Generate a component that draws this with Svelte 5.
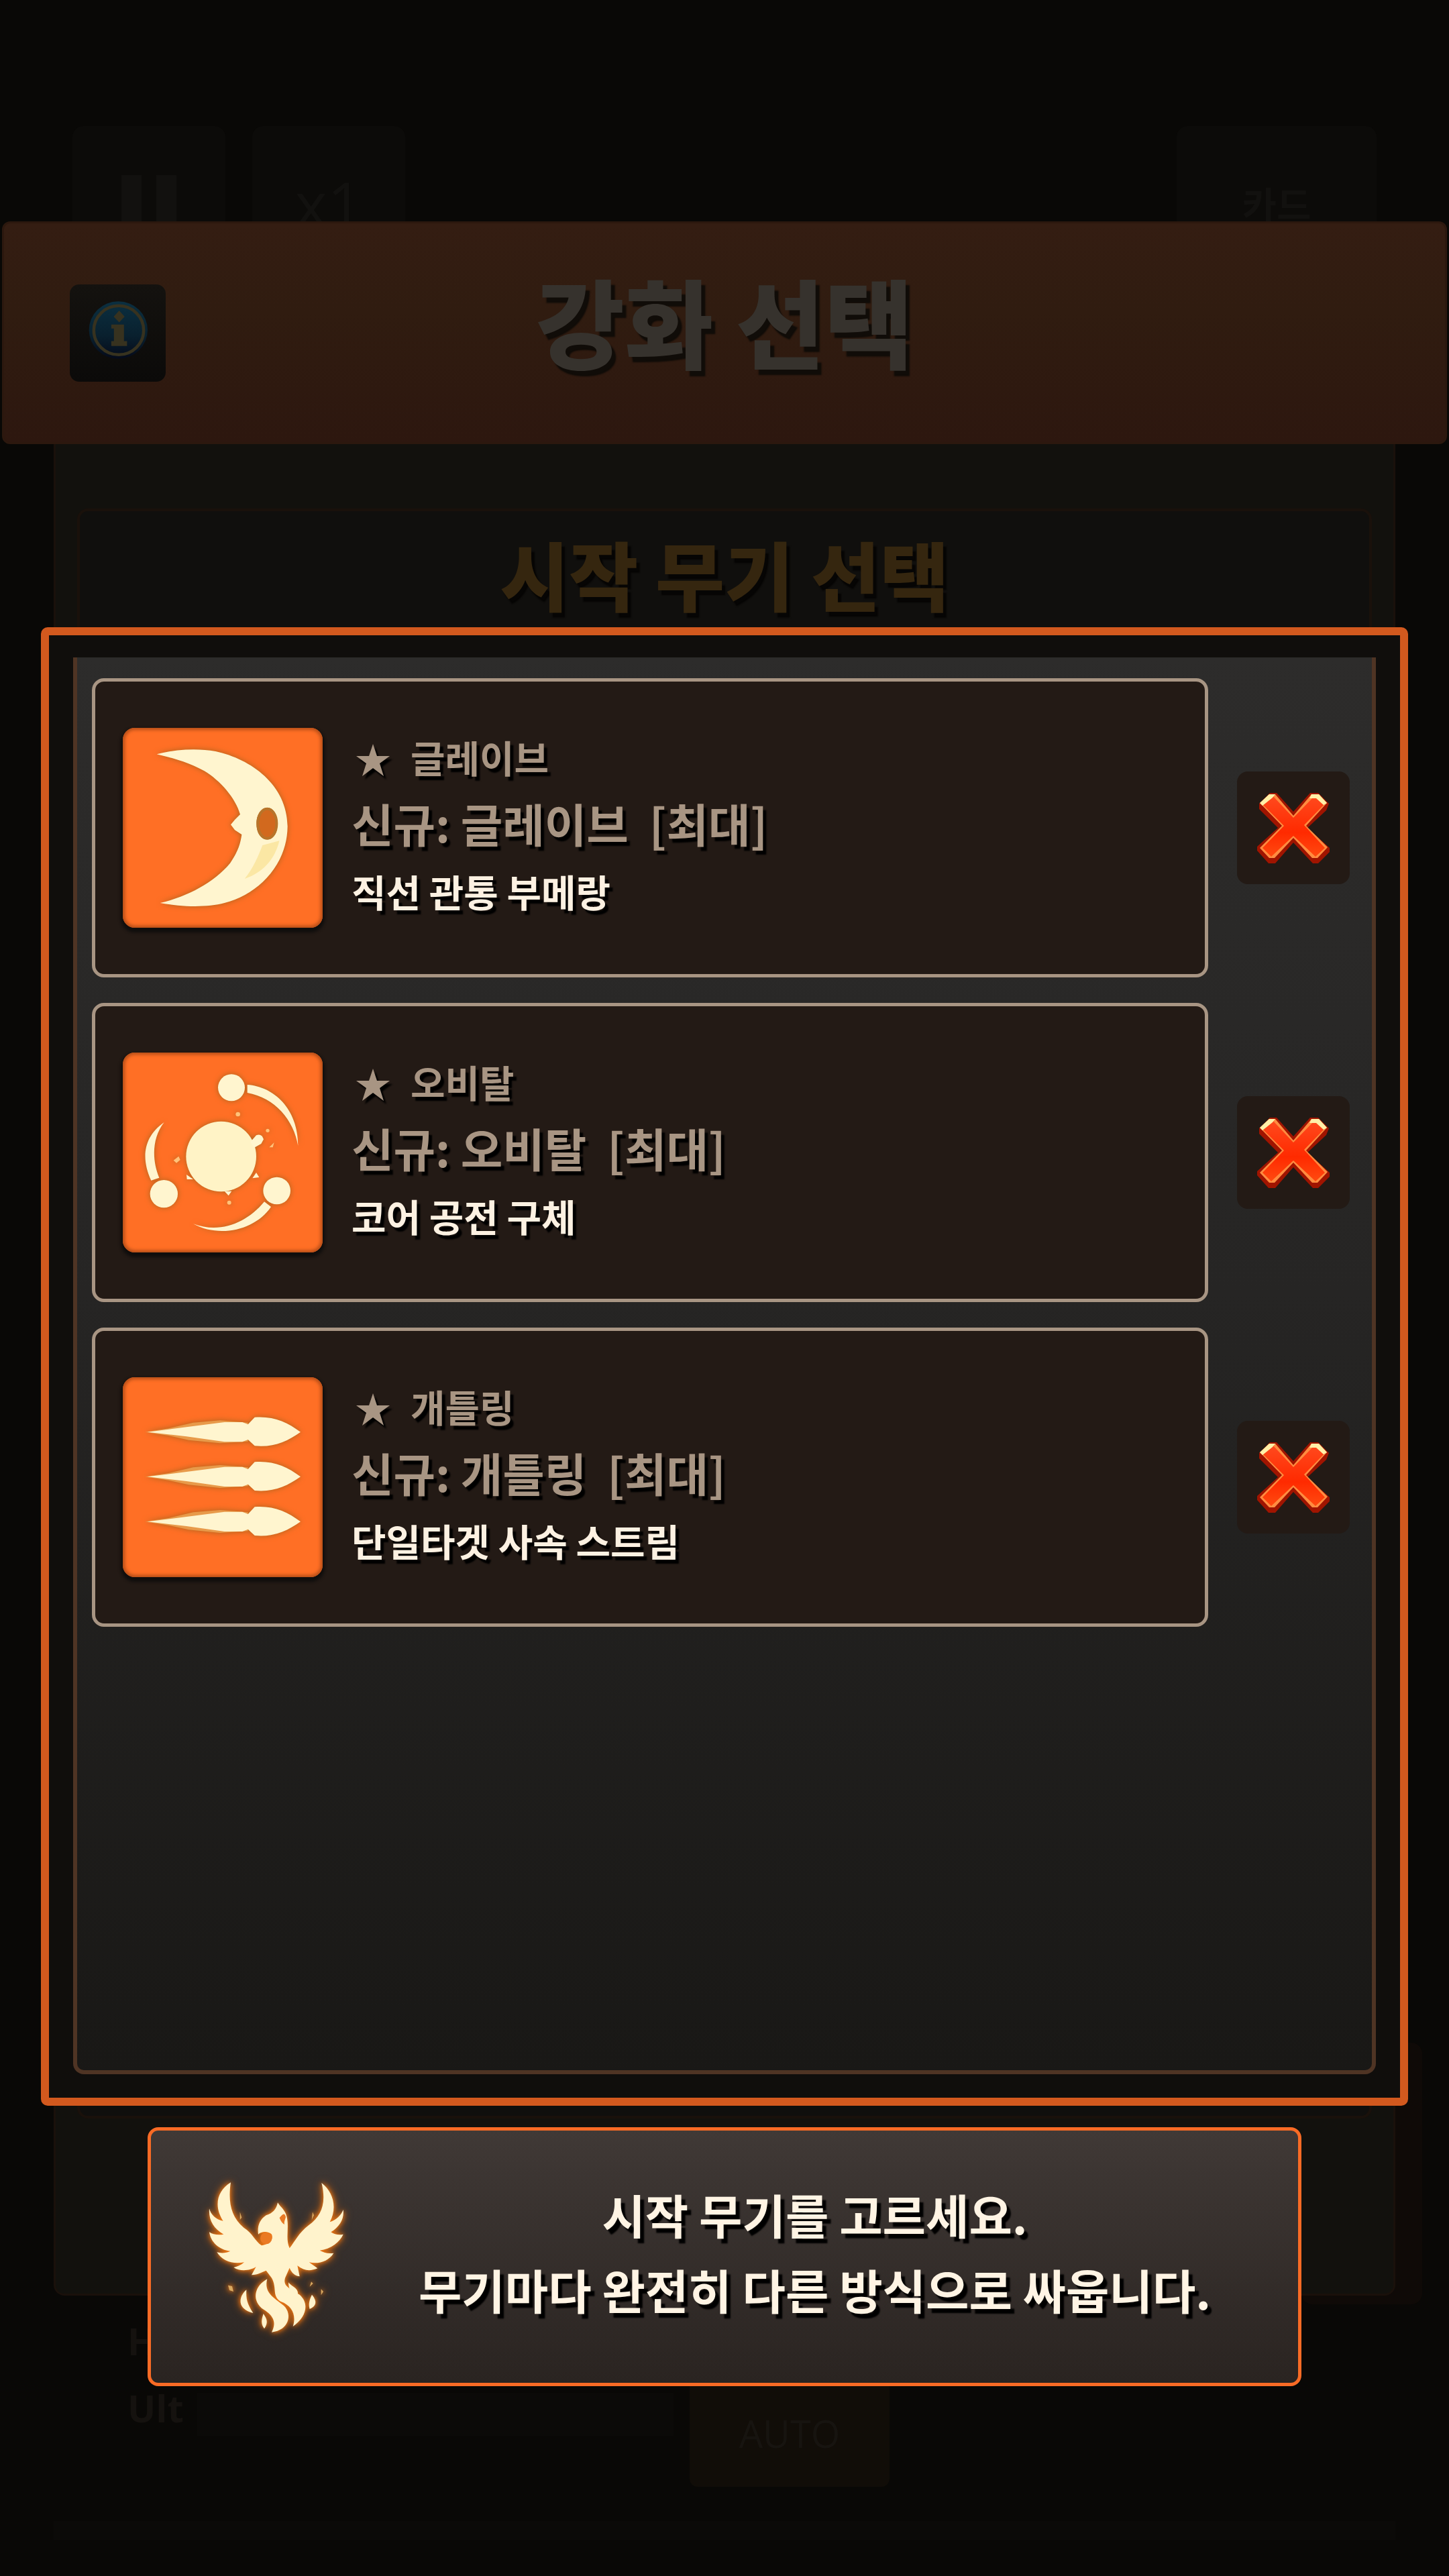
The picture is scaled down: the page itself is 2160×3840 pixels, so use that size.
<script>
  const weapons = [
    { id: 'glaive', name: '글레이브', text: '직선 관통 부메랑' },
    { id: 'orbital', name: '오비탈', text: '코어 공전 구체' },
    { id: 'gatling', name: '개틀링', text: '단일타겟 사속 스트림' }
  ];
  let removed = $state([]);
  const shown = $derived(weapons.filter((w) => !removed.includes(w.id)));
</script>

{#snippet glaive()}
  <svg class="art" viewBox="65 75 894 894" aria-hidden="true">
    <path fill-rule="evenodd" d="M217 193C300 170 400 165 480 180C640 215 800 330 802 515C800 690 670 820 520 858C440 880 320 875 232 858C350 830 470 770 545 680C580 630 592 590 597 552L566 532L548 508L566 486L590 462C570 390 500 310 430 268C360 230 290 210 217 193ZM711 432C683 432 663 465 663 503C663 545 683 574 711 574C740 574 757 545 757 503C757 465 740 432 711 432Z" />
    <path class="shade" d="M690 600L765 580C750 650 700 720 610 750C650 700 670 650 690 600Z" />
    <ellipse class="eye" cx="711" cy="503" rx="42" ry="66" />
  </svg>
{/snippet}

{#snippet orbital()}
  <svg class="art" viewBox="65 88 894 894" aria-hidden="true">
    <circle class="core" cx="505" cy="553" r="157" />
    <circle cx="551" cy="245" r="60" />
    <circle cx="249" cy="720" r="62" />
    <circle cx="754" cy="706" r="61" />
    <path d="M622 232C740 240 850 340 849 505C830 390 745 290 622 268Z" />
    <path d="M250 400C150 470 150 570 192 660L228 648C195 570 195 470 250 400Z" />
    <path d="M698 755C620 850 500 900 380 854C500 920 660 880 728 778Z" />
    <path d="M636 488L662 458Q686 448 695 476L684 496L652 514Z" />
    <path d="M350 634L380 655L352 655ZM662 625L675 646L645 650ZM520 708H552L538 728Z" />
    <g class="spark">
      <circle cx="580" cy="364" r="10" /><circle cx="713" cy="437" r="8" />
      <circle cx="541" cy="759" r="9" />
      <path d="M292 570L315 552L322 568L305 582ZM720 512L742 490L736 512Z" />
    </g>
  </svg>
{/snippet}

{#snippet gatling()}
  <svg class="art" viewBox="65 70 894 894" aria-hidden="true">
    {#each [315, 515, 716] as y}
      <g transform="translate(0 {y})">
        <path class="trail" d="M165 0L270 -16L380 -42L500 -52L625 -42V42L500 50L360 36L270 16Z" />
        <path d="M175 0L350 -22L520 -44H600L625 -34L655 -66C740 -72 800 -45 860 0C800 42 740 70 655 62L625 34L600 44H520L350 20Z" />
      </g>
    {/each}
  </svg>
{/snippet}

<main class="stage">
  <div class="hud">
    <div class="hud-top">
      <button class="hud-btn" aria-label="일시정지"><span class="bars"></span></button>
      <button class="hud-btn speed">x1</button>
      <button class="hud-btn cards">카드</button>
    </div>
    <div class="side-box"></div>
    <div class="hud-low">
      <div class="gauges"><span>HP</span><span>Ult</span></div>
      <div class="gauge-bar"></div>
      <button class="auto">AUTO</button>
    </div>
    <div class="hud-line"></div>
  </div>

  <section class="modal">
    <header class="banner">
      <button class="info" aria-label="정보">
        <svg viewBox="100 112 276 270" aria-hidden="true">
          <defs>
            <linearGradient id="blue" x1="0" y1="0" x2="0" y2="1">
              <stop offset="0" stop-color="#0b2f40" /><stop offset="0.6" stop-color="#09202e" /><stop offset="1" stop-color="#050a1a" />
            </linearGradient>
          </defs>
          <ellipse cx="239" cy="247" rx="134" ry="131" fill="url(#blue)" />
          <ellipse cx="241" cy="248" rx="114" ry="112" fill="none" stroke="#37321f" stroke-width="14" />
          <path fill="#37321f" d="M243 158L268 186L243 212L218 186ZM207 222H265V298H279V320H207V298H219V240H207Z" />
        </svg>
      </button>
      <h1>강화 선택</h1>
    </header>
    <div class="sheet">
      <div class="sheet-inner"><h2>시작 무기 선택</h2></div>
    </div>
  </section>

  <section class="guide">
    <div class="focus">
      <ul class="list">
        {#each shown as w (w.id)}
          <li>
            <button class="card">
              <span class="tile">
                {#if w.id === 'glaive'}{@render glaive()}{:else if w.id === 'orbital'}{@render orbital()}{:else}{@render gatling()}{/if}
              </span>
              <span class="copy">
                <span class="tag">
                  <svg class="star" viewBox="0 0 52 50" aria-hidden="true"><path d="M26 0L32 18H51L36 29L42 48L26 36L10 48L16 29L1 18H20Z" /></svg>
                  {w.name}
                </span>
                <span class="name">신규: {w.name}&nbsp; [최대]</span>
                <span class="desc">{w.text}</span>
              </span>
            </button>
            <button class="remove" aria-label="{w.name} 제외" onclick={() => (removed = [...removed, w.id])}>
              <svg viewBox="0 0 110 108" aria-hidden="true">
                <defs>
                  <linearGradient id="red-{w.id}" x1="0" y1="0" x2="0" y2="1">
                    <stop offset="0" stop-color="#ff4a1e" /><stop offset=".6" stop-color="#ff2a00" /><stop offset="1" stop-color="#ff4a10" />
                  </linearGradient>
                </defs>
                <path class="x-back" d="M4 18L20 2L30 2L55 30L80 2H92L108 18L104 28L76 54L109 84V90L92 107H84L55 76L28 107H18L1 88V82L32 54L4 26Z" />
                <path class="x-edge" d="M5 17L19 4H28L55 36L82 4H93L105 17L74 51L106 83L91 99H83L55 69L27 99H19L5 84L38 51Z" />
                <path fill="url(#red-{w.id})" d="M9 19L24 6L55 39L87 6L101 19L71 50L102 84L88 97L55 66L22 97L9 84L41 51Z" />
                <path class="x-shine" d="M5 17L19 4H28L24 9L9 21ZM82 4H93L105 17L100 20L89 10L79 10Z" />
              </svg>
            </button>
          </li>
        {/each}
      </ul>
    </div>

    <aside class="tip">
      <svg class="phoenix" viewBox="45 55 645 690" aria-hidden="true">
        <path d="M162 68C100 105 85 175 128 240C95 235 72 210 66 185C62 235 85 275 130 300C105 305 80 300 66 290C72 335 110 370 160 375C140 385 118 385 100 380C125 420 170 435 222 425C205 440 190 445 175 448C205 468 250 462 275 445L255 482C285 480 300 470 320 462L345 495C370 540 345 575 385 600C440 620 455 665 440 712C500 670 515 610 470 570C420 540 395 530 405 495L425 450C435 475 450 485 470 488L460 440C490 465 520 465 550 452L512 425C555 435 600 420 622 384C595 388 575 380 560 372C610 365 650 335 665 300C645 305 625 300 610 290C650 265 670 230 665 190C655 215 635 235 605 245C640 180 620 110 568 70C590 160 570 215 510 260C465 295 450 330 425 362C405 320 425 270 412 220C405 190 385 180 372 158C365 190 350 205 320 215C290 235 280 265 285 300C300 285 330 285 345 300C355 325 335 345 300 350C270 330 260 295 220 270C160 220 150 150 162 68Z" />
        <path d="M325 500C270 530 255 590 300 630C350 660 370 690 345 738C420 730 440 660 400 620C350 580 310 560 325 500Z" />
        <path d="M232 548C195 580 190 635 262 652C235 610 230 590 232 548ZM308 655C325 680 330 695 312 722C295 700 300 680 308 655ZM525 570C550 600 545 620 515 634C508 610 515 590 525 570ZM420 515C435 535 465 540 462 568C435 565 420 550 420 515Z" />
        <path class="ember" d="M150 528L168 532L174 556L156 550ZM522 512L530 520L515 534ZM566 545L576 556L566 572ZM203 200L211 225L203 235ZM528 200L534 215L524 236Z" />
        <path class="crest" d="M380 226C395 208 402 202 408 222C404 240 400 240 402 256C390 248 386 240 380 226Z" />
        <circle class="crest" cx="320" cy="318" r="26" />
      </svg>
      <p>시작 무기를 고르세요.<br />무기마다 완전히 다른 방식으로 싸웁니다.</p>
    </aside>
  </section>
</main>

<style>
  :global(body) { margin: 0; background: #090806; }
  * { box-sizing: border-box; }
  button { padding: 0; border: 0; font: inherit; color: inherit; cursor: pointer; }
  h1, h2, p, ul { margin: 0; padding: 0; }

  .stage {
    display: grid;
    min-height: 100vh;
    background: #090806;
    font-family: "Noto Sans CJK KR", "Noto Sans", sans-serif;
    font-weight: 700;
  }
  .hud, .modal, .guide { grid-area: 1 / 1; display: flex; flex-direction: column; min-width: 0; }

  .hud { padding: 188px 0 24px; }
  .hud-top { display: flex; gap: 40px; padding: 0 108px; }
  .hud-btn {
    display: grid; place-items: center;
    width: 228px; height: 228px;
    background: #0c0b09; color: #12110f; border-radius: 16px;
    font-size: 80px; font-weight: 400;
  }
  .speed { font-family: "Open Sans", sans-serif; font-size: 92px; }
  .cards { width: 298px; margin-left: auto; font-size: 56px; font-weight: 700; }
  .bars { width: 82px; height: 82px; border: solid #12110f; border-width: 0 30px; }
  .side-box { width: 180px; height: 390px; margin: 2629px 40px 0 auto; background: #0f0a07; border-radius: 16px; }
  .hud-low { display: flex; align-items: flex-start; gap: 24px; margin-top: 16px; padding: 0 190px; }
  .gauges { display: grid; width: 80px; gap: 24px; color: #15120f; font: 700 56px/76px "Open Sans", sans-serif; }
  .gauge-bar { width: 710px; height: 64px; margin-top: 116px; background: #0b0a08; }
  .auto { width: 298px; height: 256px; background: #110d08; color: #171410; border-radius: 12px; font: 400 56px/64px "Open Sans", sans-serif; padding-top: 96px; }
  .hud-line { height: 28px; margin: auto 80px 30px; background: #0b0a08; }

  .modal { padding-top: 330px; }
  .banner {
    display: grid; grid-template-columns: 1fr auto 1fr; align-items: center;
    height: 332px; margin: 0 3px; padding: 0 98px;
    background: linear-gradient(#341d12, #301c10 40%, #2d170f);
    border: 3px solid #2c180e; border-radius: 12px;
  }
  .info { display: grid; place-items: center; width: 143px; height: 145px; border-radius: 14px; background: linear-gradient(#14120f, #0b0a09); }
  .info svg { width: 90px; height: 88px; margin-bottom: 8px; }
  h1 { color: #36322d; font-size: 144px; font-weight: 900; line-height: 160px; padding-bottom: 40px; text-shadow: 6px 8px 2px #100c08; }
  .sheet { height: 2760px; margin: 0 80px; padding: 96px 32px; background: #12110d; border: 3px solid #1a110b; border-top: 0; border-radius: 0 0 16px 16px; }
  .sheet-inner { height: 2400px; padding-top: 12px; background: #100f0d; border: 4px solid #1a110b; border-radius: 16px; }
  h2 { color: #35260f; font-size: 112px; font-weight: 900; line-height: 160px; text-align: center; text-shadow: 5px 7px 2px #060504; }

  .guide { padding-top: 935px; z-index: 1; }
  .focus {
    display: flex; min-height: 2204px; margin: 0 61px; padding: 33px 36px 35px;
    border: 12px solid #d2591e; border-radius: 10px; background: #100e0c;
  }
  .list {
    flex: 1; display: flex; flex-direction: column; gap: 38px; list-style: none;
    padding: 31px 33px 48px 22px;
    background: linear-gradient(#2d2c2b, #262524 45%, #191816);
    border: 6px solid #4f3424; border-top: 0; border-radius: 0 0 16px 16px;
  }
  .list li { display: flex; align-items: center; gap: 43px; }
  .card {
    flex: 1; display: flex; align-items: center; gap: 43px; min-height: 446px; padding: 0 41px;
    background: #231a15; border: 5px solid #a89583; border-radius: 18px; text-align: left;
  }
  .tile {
    flex: none; width: 298px; height: 298px; border-radius: 18px; background: #ff6f25; overflow: hidden;
    box-shadow: inset 0 0 5px 3px #b34d18, 0 4px 4px 3px #100e0d;
  }
  .art { display: block; width: 100%; height: 100%; fill: #fff5cf; filter: drop-shadow(0 0 4px #a8641c); }
  .art .shade { fill: #fbe7a4; }
  .art .eye { fill: #d2691e; stroke: #b8742a; stroke-width: 12px; }
  .art .core { fill: #fff3c6; }
  .art .spark { fill: #ffc27a; }
  .art .trail { fill: #e89a4a; }
  .copy { display: flex; flex-direction: column; padding-bottom: 10px; color: #a89583; text-shadow: 5px 6px 2px #000; white-space: nowrap; }
  .tag { display: flex; align-items: center; gap: 30px; padding-left: 6px; font-size: 56px; line-height: 96px; }
  .star { width: 52px; height: 50px; margin-top: 12px; fill: #a89583; filter: drop-shadow(4px 5px 1px #000); }
  .name { font-size: 68px; line-height: 102px; }
  .desc { font-size: 56px; line-height: 100px; color: #fcf1e2; }
  .remove { display: grid; place-items: center; width: 168px; height: 168px; background: #231a15; border-radius: 16px; }
  .remove svg { width: 110px; height: 108px; }
  .x-back { fill: #a01400; }
  .x-edge { fill: #ff8c40; }
  .x-shine { fill: #fff0a8; }

  .tip {
    display: flex; align-items: center; gap: 38px; min-height: 386px; margin: 32px 220px 0; padding: 0 64px 0 80px;
    background: linear-gradient(#403936, #2a2421); border: 5px solid #f86b25; border-radius: 16px;
  }
  .phoenix { flex: none; width: 215px; height: 230px; fill: #fff3cc; filter: drop-shadow(0 0 3px #f07a18) drop-shadow(0 0 6px #d0660f); }
  .crest { fill: #ea7a24; }
  .ember { fill: #d9a860; }
  .tip p { flex: 1; padding-bottom: 14px; color: #fff4e4; font-size: 70px; line-height: 112px; text-align: center; text-shadow: 6px 7px 2px #000; }
</style>
